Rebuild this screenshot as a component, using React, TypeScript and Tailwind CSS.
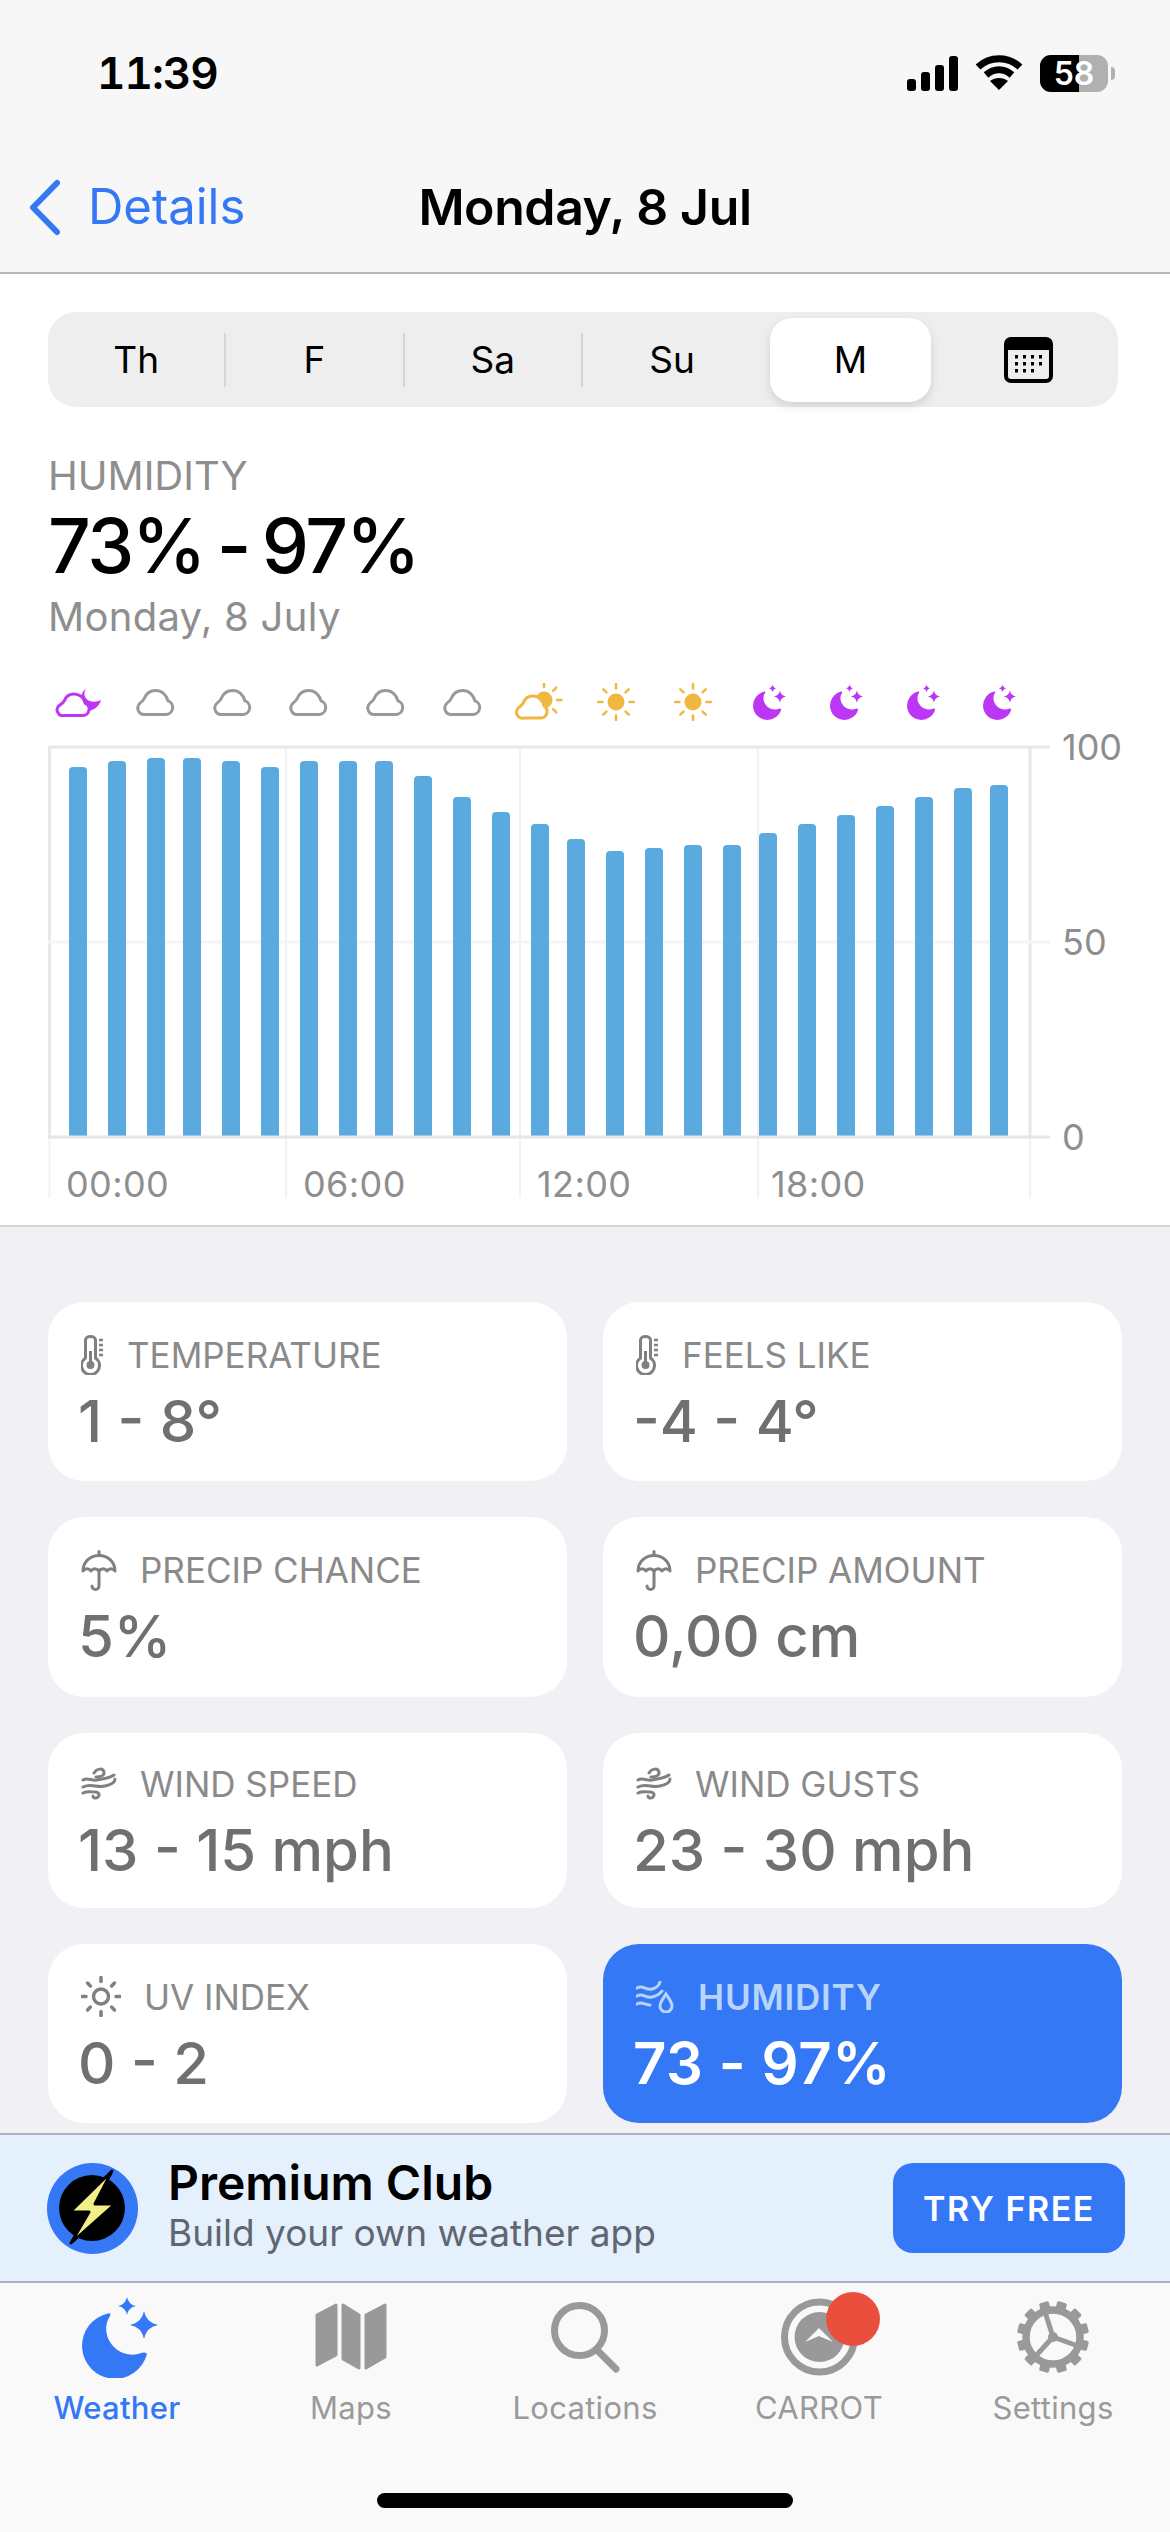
import type { ReactNode } from 'react';

const barX = [69, 108, 147, 183, 222, 261, 300, 339, 375, 414, 453, 492, 531, 567, 606, 645, 684, 723, 759, 798, 837, 876, 915, 954, 990];
const barTop = [768, 762, 759, 759, 762, 768, 762, 762, 762, 777, 798, 813, 825, 840, 852, 849, 846, 846, 834, 825, 816, 807, 798, 789, 786];

function star(cx: number, cy: number, r: number) {
  const k = r * 0.16;
  return `M${cx} ${cy - r}Q${cx + k} ${cy - k} ${cx + r} ${cy}Q${cx + k} ${cy + k} ${cx} ${cy + r}Q${cx - k} ${cy + k} ${cx - r} ${cy}Q${cx - k} ${cy - k} ${cx} ${cy - r}Z`;
}

function MoonStars({ color, w, h }: { color: string; w: number; h: number }) {
  return (
    <svg width={w} height={h} viewBox="0 0 76 81" fill={color}>
      <path d="M26 16.500A33 33 0 1 0 65 57C62 54 60 56 56 57C42 60 30 52 25.500 40C23 32 24 25 28 19C29 17 28 16 26 16.500Z" />
      <path d={star(62, 28, 14)} />
      <path d={star(45, 9, 9)} />
    </svg>
  );
}

const CLOUD = 'M9.500 25.500h21a7 7 0 0 0 2.500-13.600C31.500 5.500 26.500 1.500 20.500 1.500c-5 0-9 2.800-11 7.500-1 2.400-2.200 3.400-4.200 4.900a6.500 6.500 0 0 0 4.200 11.600z';

function Cloud() {
  return (
    <svg width="40" height="27" viewBox="0 0 40 27" fill="none" stroke="#999999" strokeWidth="3" strokeLinejoin="round">
      <path d={CLOUD} />
    </svg>
  );
}

function CloudMoon() {
  return (
    <svg width="46" height="30" viewBox="0 0 46 30" fill="none" className="shrink-0">
      <path d="M31 1C27 8 31 14 37 14.500C40 15 43 14.500 46 13C44 20 38 24 32 24L25 16C25 10 27 5 31 1Z" fill="#bb36f5" />
      <path d="M9 28.500h18a6.500 6.500 0 0 0 3-12.500C29 10 24 7 19 7c-4.500 0-8 2.500-9.500 6.500-1 2-2.500 3-5 4.800A5.700 5.700 0 0 0 9 28.500z" fill="#ffffff" stroke="#bb36f5" strokeWidth="3" strokeLinejoin="round" />
    </svg>
  );
}

function SunRays({ cx, cy, r1, r2, color, width, skip = [] }: { cx: number; cy: number; r1: number; r2: number; color: string; width: number; skip?: number[] }) {
  return (
    <>
      {[0, 45, 90, 135, 180, 225, 270, 315]
        .filter((a) => !skip.includes(a))
        .map((a) => {
          const rad = (a * Math.PI) / 180;
          return (
            <line
              key={a}
              x1={cx + Math.cos(rad) * r1}
              y1={cy + Math.sin(rad) * r1}
              x2={cx + Math.cos(rad) * r2}
              y2={cy + Math.sin(rad) * r2}
              stroke={color}
              strokeWidth={width}
              strokeLinecap="round"
            />
          );
        })}
    </>
  );
}

function Sun() {
  return (
    <svg width="38" height="38" viewBox="0 0 38 38">
      <circle cx="19" cy="19" r="8.500" fill="#f0b840" />
      <SunRays cx={19} cy={19} r1={13.500} r2={18} color="#f0b840" width={2.500} />
    </svg>
  );
}

function CloudSun() {
  return (
    <svg width="48" height="38" viewBox="0 0 48 38" className="shrink-0">
      <circle cx="29" cy="17" r="8.500" fill="#f0b840" />
      <SunRays cx={29} cy={17} r1={13} r2={17.500} color="#f0b840" width={2.500} skip={[90, 180, 225]} />
      <path d="M9 35h17a6.500 6.500 0 0 0 3-12C28 17 23 13 18 13c-4.500 0-8 2.500-9.500 6.500-1 2-2 3-4 4.500A6 6 0 0 0 9 35z" fill="#ffffff" stroke="#f0b840" strokeWidth="3" strokeLinejoin="round" />
    </svg>
  );
}

function Thermometer() {
  return (
    <svg width="23" height="40" viewBox="0 0 23 40" fill="none" stroke="#808080" strokeWidth="3">
      <path d="M4.500 5a5 3.500 0 0 1 10 0V23a9 9 0 1 1-10 0z" />
      <circle cx="9.500" cy="30" r="4" fill="#808080" stroke="none" />
      <line x1="9.500" y1="16" x2="9.500" y2="28" />
      <path d="M18 5h4M18 10h4M18 15h4M18 20h4" strokeWidth="2.500" />
    </svg>
  );
}

function Umbrella() {
  return (
    <svg width="36" height="41" viewBox="0 0 36 41" fill="none" stroke="#808080" strokeWidth="3" strokeLinecap="round" strokeLinejoin="round">
      <path d="M18 1.500v4" />
      <path d="M2 21C2 12 9 5.500 18 5.500S34 12 34 21c-2-3-6-3-8 0-2-3-5.500-3-8 0-2.500-3-6-3-8 0-2-3-6-3-8 0z" />
      <path d="M18 20v16a3.500 3.500 0 0 1-7 0" />
    </svg>
  );
}

function Wind() {
  return (
    <svg width="36" height="33" viewBox="0 0 36 33" fill="none" stroke="#808080" strokeWidth="3" strokeLinecap="round">
      <path d="M13 6c3-5 9-5 10-1 .5 3-2 5-8 5" />
      <path d="M2 13c5-3 8 1 14 0 6-1 13-2 17-5" />
      <path d="M2 20c8-4 14 1 22-1 5-1 10-3 10-7" />
      <path d="M2 26c4-2 8-1 12-1 4 0 5 3 3 5-2 2-5 1-5-1" />
    </svg>
  );
}

function UvSun() {
  return (
    <svg width="40" height="41" viewBox="0 0 40 41" fill="none">
      <circle cx="20" cy="20.500" r="7.500" stroke="#808080" strokeWidth="3.500" />
      <SunRays cx={20} cy={20.500} r1={15} r2={19} color="#808080" width={3.500} />
    </svg>
  );
}

function HumidityIcon() {
  return (
    <svg width="39" height="32" viewBox="0 0 39 32" fill="none" stroke="#b9d4fb" strokeWidth="3" strokeLinecap="round">
      <path d="M1 7c6-4 9 3 15 1 4-1 7-3 8-7" />
      <path d="M1 15c6-4 9 3 15 1 4-1 8-3 10-6" />
      <path d="M1 23c5-3 8 1 13 1" />
      <path d="M30 13c3 5 6 8 6 12a6 6 0 0 1-12 0c0-4 3-7 6-12z" />
    </svg>
  );
}

function BackChevron() {
  return (
    <svg width="33" height="57" viewBox="0 0 33 57" fill="none" stroke="#3478f6" strokeWidth="6" strokeLinecap="round" strokeLinejoin="round">
      <path d="M29 4L5 28.500 29 53" />
    </svg>
  );
}

function CalendarIcon() {
  return (
    <svg width="49" height="46" viewBox="0 0 49 46">
      <rect x="2" y="2" width="45" height="42" rx="5" fill="none" stroke="#000000" strokeWidth="4" />
      <path d="M1 6a5 5 0 0 1 5-5h37a5 5 0 0 1 5 5v7H1z" fill="#000000" />
      {[18, 25, 32].flatMap((y, row) =>
        [11, 19, 27, 35].map((x) =>
          row === 2 && x === 35 ? null : <rect key={`${x}-${y}`} x={x} y={y} width="3" height="3.500" fill="#000000" />,
        ),
      )}
    </svg>
  );
}

function MapIcon() {
  return (
    <svg width="72" height="68" viewBox="0 0 72 68" fill="#999999" stroke="#999999" strokeWidth="3" strokeLinejoin="round">
      <path d="M21 2L2 12V62L21 52Z" />
      <path d="M28 2L44 12V65L28 56Z" />
      <path d="M51 12L70 2V54L51 65Z" />
    </svg>
  );
}

function SearchIcon() {
  return (
    <svg width="69" height="71" viewBox="0 0 69 71" fill="none" stroke="#999999" strokeWidth="7" strokeLinecap="round">
      <circle cx="28.500" cy="28.500" r="25" />
      <path d="M46 48L65 67" />
    </svg>
  );
}

function CarrotIcon() {
  return (
    <div className="relative h-[78px] w-[77px]">
      <svg width="77" height="78" viewBox="0 0 77 78">
        <circle cx="38.500" cy="39" r="35" fill="none" stroke="#999999" strokeWidth="7" />
        <circle cx="38.500" cy="39" r="25" fill="#999999" />
        <path d="M24 44L38 30 52 44 38 38Z" fill="#f9f9f9" />
      </svg>
      <span className="absolute left-[45px] top-[-6px] h-[54px] w-[54px] rounded-full bg-[#ea4f3d]" />
    </div>
  );
}

function GearIcon() {
  const teeth = [0, 30, 60, 90, 120, 150, 180, 210, 240, 270, 300, 330];
  return (
    <svg width="74" height="74" viewBox="0 0 74 74" fill="none">
      {teeth.map((a) => (
        <rect key={a} x="32" y="1" width="10" height="12" rx="1.500" fill="#999999" transform={`rotate(${a + 15} 37 37)`} />
      ))}
      <circle cx="37" cy="37" r="27" stroke="#999999" strokeWidth="7.500" />
      <path d="M37 37L29 12M37 37L62 46M37 37L17 59" stroke="#999999" strokeWidth="5" />
      <circle cx="37" cy="37" r="5" fill="#999999" />
    </svg>
  );
}

function PremiumLogo() {
  return (
    <svg width="91" height="91" viewBox="0 0 91 91" className="shrink-0">
      <circle cx="45.500" cy="45.500" r="45.500" fill="#3478f6" />
      <circle cx="45" cy="45" r="33" fill="#000000" />
      <path d="M65 8L23 49H42L24 80L68 41H48Z" fill="#f2ef87" stroke="#000000" strokeWidth="3" strokeLinejoin="round" />
    </svg>
  );
}

function StatusIcons() {
  return (
    <div className="flex items-center gap-[17px]">
      <svg width="51" height="35" viewBox="0 0 51 35" fill="#000000">
        <rect x="0" y="23" width="9" height="12" rx="3" />
        <rect x="14" y="16" width="9" height="19" rx="3" />
        <rect x="28" y="9" width="9" height="26" rx="3" />
        <rect x="42" y="0" width="9" height="35" rx="3" />
      </svg>
      <svg width="48" height="36" viewBox="0 0 48 36" fill="none" stroke="#000000" strokeWidth="7">
        <path d="M3 12C15 1 33 1 45 12" />
        <path d="M11 20C19 13 29 13 37 20" />
        <path d="M24 35L15 26C20 22 28 22 33 26Z" fill="#000000" stroke="none" />
      </svg>
      <div className="flex items-center gap-[3px]">
        <div className="relative h-[37px] w-[68px] overflow-hidden rounded-[11px] bg-[#b0b0b0]">
          <div className="h-full w-[39px] bg-black" />
          <span className="absolute inset-0 flex items-center justify-center text-[32px] font-semibold leading-[37px] text-white">58</span>
        </div>
        <div className="h-[13px] w-[4px] rounded-r-full bg-[#b0b0b0]" />
      </div>
    </div>
  );
}

function Chart() {
  return (
    <div className="flex">
      <div className="relative ml-[48px] h-[453px] w-[1002px]">
        <svg width="1002" height="453" viewBox="0 0 1002 453" className="block">
          {[238, 472, 710].map((x) => (
            <line key={x} x1={x} y1="2" x2={x} y2="453" stroke="#f2f2f2" strokeWidth="2" />
          ))}
          <path d="M1.500 392V453M982 392V453" stroke="#f2f2f2" strokeWidth="2" />
          <path d="M1.500 2V392M982 2V392" stroke="#e8e8e8" strokeWidth="3" />
          <line x1="0" y1="197" x2="1002" y2="197" stroke="#f5f5f5" strokeWidth="3" />
          {barX.map((x, i) => {
            const left = x - 48;
            const top = barTop[i] - 746;
            return (
              <path
                key={x}
                d={`M${left} 392V${top + 4}Q${left} ${top} ${left + 4} ${top}H${left + 14}Q${left + 18} ${top} ${left + 18} ${top + 4}V392Z`}
                fill="#5aaae0"
              />
            );
          })}
          <line x1="0" y1="2" x2="1002" y2="2" stroke="#e8e8e8" strokeWidth="3" />
          <line x1="0" y1="392" x2="1002" y2="392" stroke="#e6e6e6" strokeWidth="3" />
        </svg>
        <div className="absolute left-0 top-[419px] grid grid-cols-[238px_234px_238px_272px] text-[36px] leading-[40px] tracking-[0.4px] text-[#8e8e8e]">
          <span className="pl-[18px]">00:00</span>
          <span className="pl-[17px]">06:00</span>
          <span className="pl-[17px]">12:00</span>
          <span className="pl-[13px]">18:00</span>
        </div>
      </div>
      <div className="ml-[12px] mt-[2px] flex h-[390px] flex-col justify-between text-[36px] text-[#8e8e8e]">
        <span className="flex h-0 items-center">100</span>
        <span className="flex h-0 items-center">50</span>
        <span className="flex h-0 items-center">0</span>
      </div>
    </div>
  );
}

function DetailCard({ icon, label, value, active }: { icon: ReactNode; label: string; value: string; active?: boolean }) {
  return (
    <div className={`flex flex-col justify-center rounded-[36px] pl-[33px] pt-[6px] ${active ? 'bg-[#3478f6]' : 'bg-white'}`}>
      <div className="flex h-[42px] items-center gap-[23px]">
        {icon}
        <span className={`text-[35px] leading-[42px] ${active ? 'font-semibold tracking-[0.8px] text-[#b9d4fb]' : 'text-[#8a8a8a]'}`}>{label}</span>
      </div>
      <div className={`-ml-[3px] mt-[10px] text-[58px] leading-[70px] ${active ? 'font-semibold tracking-[0.6px] text-white' : 'font-medium text-[#707070]'}`}>{value}</div>
    </div>
  );
}

function TabItem({ icon, label, active }: { icon: ReactNode; label: string; active?: boolean }) {
  return (
    <div className="flex flex-col items-center">
      <div className="flex h-[86px] items-center justify-center">{icon}</div>
      <span className={`mt-[8px] text-[31px] leading-[40px] tracking-[0.3px] ${active ? 'font-medium text-[#3478f6]' : 'text-[#9a9a9a]'}`}>{label}</span>
    </div>
  );
}

export default function App() {
  const days = ['Th', 'F', 'Sa', 'Su'];

  return (
    <div className="flex h-[2532px] w-[1170px] flex-col overflow-hidden bg-[#f0f0f5] font-['Inter',sans-serif] text-black">
      {/* Status + nav */}
      <div className="border-b-2 border-[#b8b8b8] bg-[#f7f7f7]">
        <div className="flex h-[146px] items-center justify-between pl-[97px] pr-[55px]">
          <span className="text-[44px] font-semibold tabular-nums tracking-[-1px]">11:39</span>
          <StatusIcons />
        </div>
        <div className="grid h-[126px] grid-cols-[1fr_auto_1fr] items-center pb-[4px]">
          <div className="flex items-center gap-[27px] pl-[28px]">
            <BackChevron />
            <span className="text-[49px] text-[#3478f6]">Details</span>
          </div>
          <span className="text-[50px] font-semibold tracking-[-0.4px]">Monday, 8 Jul</span>
          <span />
        </div>
      </div>

      {/* Chart section */}
      <div className="h-[953px] border-b-2 border-[#d4d4d8] bg-white">
        <div className="mx-[48px] mt-[38px] grid h-[95px] w-[1070px] grid-cols-6 items-center rounded-[28px] bg-[#eeeeee] text-[37px]">
          {days.map((d, i) => (
            <div key={d} className={`flex h-[54px] items-center justify-center ${i < 3 ? 'border-r-2 border-[#d6d6d6]' : ''}`}>
              {d}
            </div>
          ))}
          <div className="mx-auto flex h-[84px] w-[161px] items-center justify-center rounded-[22px] bg-white shadow-[0_4px_10px_rgba(0,0,0,0.12)]">M</div>
          <div className="flex items-center justify-center">
            <CalendarIcon />
          </div>
        </div>

        <div className="ml-[48px] mt-[45px] text-[40px] leading-[48px] text-[#8e8e8e]">HUMIDITY</div>
        <div className="ml-[48px] mt-[6px] text-[75px] font-medium leading-[80px] tracking-[-0.03em] [word-spacing:-0.07em]">73% - 97%</div>
        <div className="ml-[48px] mt-[7px] text-[40px] leading-[48px] tracking-[0.3px] text-[#8e8e8e]">Monday, 8 July</div>

        <div className="ml-[58px] mt-[41px] flex h-[40px] w-[962px] items-center justify-between">
          {[
            <CloudMoon />,
            <Cloud />,
            <Cloud />,
            <Cloud />,
            <Cloud />,
            <Cloud />,
            <CloudSun />,
            <Sun />,
            <Sun />,
            <MoonStars color="#bb36f5" w={33} h={36} />,
            <MoonStars color="#bb36f5" w={33} h={36} />,
            <MoonStars color="#bb36f5" w={33} h={36} />,
            <MoonStars color="#bb36f5" w={33} h={36} />,
          ].map((icon, i) => (
            <div key={i} className="flex w-[40px] justify-center">
              {icon}
            </div>
          ))}
        </div>

        <div className="mt-[23px]">
          <Chart />
        </div>
      </div>

      {/* Cards */}
      <div className="mx-[48px] mt-[75px] grid h-[821px] w-[1074px] grid-cols-2 grid-rows-[179px_180px_175px_179px] gap-[36px]">
        <DetailCard icon={<Thermometer />} label="TEMPERATURE" value="1 - 8°" />
        <DetailCard icon={<Thermometer />} label="FEELS LIKE" value="-4 - 4°" />
        <DetailCard icon={<Umbrella />} label="PRECIP CHANCE" value="5%" />
        <DetailCard icon={<Umbrella />} label="PRECIP AMOUNT" value="0,00 cm" />
        <DetailCard icon={<Wind />} label="WIND SPEED" value="13 - 15 mph" />
        <DetailCard icon={<Wind />} label="WIND GUSTS" value="23 - 30 mph" />
        <DetailCard icon={<UvSun />} label="UV INDEX" value="0 - 2" />
        <DetailCard icon={<HumidityIcon />} label="HUMIDITY" value="73 - 97%" active />
      </div>

      {/* Premium banner */}
      <div className="mt-[10px] flex h-[150px] items-center border-y-2 border-[#a8b4c6] bg-[#e5f0fd] pl-[47px] pr-[45px]">
        <PremiumLogo />
        <div className="ml-[30px] flex-1">
          <div className="text-[48px] font-semibold leading-[50px]">Premium Club</div>
          <div className="text-[37px] leading-[50px] text-[#5f6670]">Build your own weather app</div>
        </div>
        <div className="flex h-[90px] w-[232px] items-center justify-center rounded-[20px] bg-[#3478f6] text-[34px] font-semibold tracking-[1.500px] text-white">
          TRY FREE
        </div>
      </div>

      {/* Tab bar */}
      <div className="flex-1 bg-[#f9f9f9] pt-[11px]">
        <div className="grid grid-cols-5">
          <TabItem icon={<div className="ml-[5px]"><MoonStars color="#3478f6" w={76} h={81} /></div>} label="Weather" active />
          <TabItem icon={<MapIcon />} label="Maps" />
          <TabItem icon={<SearchIcon />} label="Locations" />
          <TabItem icon={<CarrotIcon />} label="CARROT" />
          <TabItem icon={<GearIcon />} label="Settings" />
        </div>
        <div className="mx-auto mt-[65px] h-[15px] w-[416px] rounded-full bg-black" />
      </div>
    </div>
  );
}
